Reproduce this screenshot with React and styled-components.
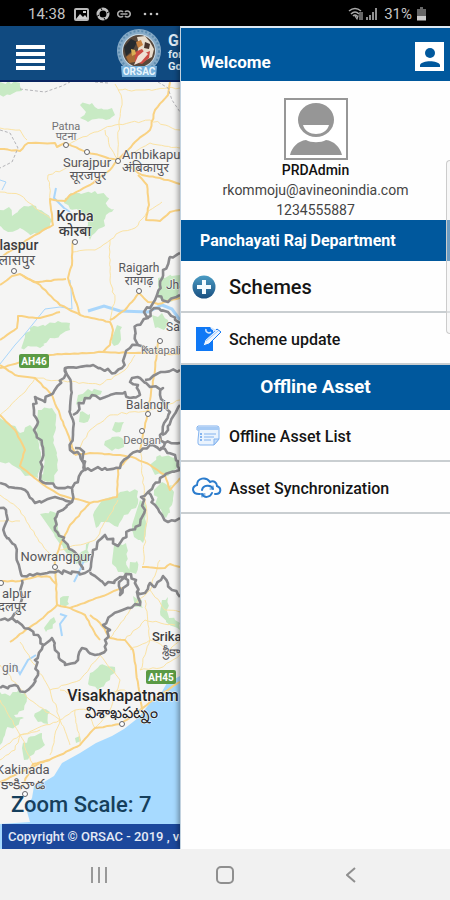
import React from "react";
import styled, { createGlobalStyle } from "styled-components";

const GlobalStyle = createGlobalStyle`
  * { box-sizing: border-box; }
  body { margin: 0; font-family: Roboto, "Noto Sans", sans-serif; background: #f1f1f1; }
  button { border: 0; padding: 0; background: none; font: inherit; color: inherit; cursor: pointer; }
  svg { display: block; flex: none; }
  p, h1, h2, ul { margin: 0; padding: 0; }
`;

const Screen = styled.div`
  display: flex;
  flex-direction: column;
  min-height: 100vh;
`;

const StatusBar = styled.header`
  display: flex;
  align-items: center;
  justify-content: space-between;
  height: 26px;
  padding: 2px 24px 0 28px;
  background: #000;
  color: #c4c4c4;
  font-size: 15px;
  line-height: 20px;
`;

const StatusGroup = styled.div`
  display: flex;
  align-items: center;
  gap: ${(p) => p.$gap}px;
`;

const Stage = styled.main`
  display: flex;
  flex: 1;
`;

const AppPane = styled.section`
  display: flex;
  flex-direction: column;
  width: 40%;
  overflow: hidden;
  background: #f5f5f4;
`;

const AppBar = styled.div`
  display: flex;
  align-items: center;
  height: 56px;
  padding-left: 16px;
  background: #104a80;
  border-bottom: 2px solid #0a2460;
  color: #dfe9f2;
`;

const MenuButton = styled.button`
  display: grid;
  flex: none;
  gap: 3px;
  width: 29px;
  margin-top: 8px;
`;

const MenuLine = styled.span`
  height: 4px;
  background: #fff;
`;

const LogoSlot = styled.div`
  margin-left: 69px;
`;

const BrandText = styled.div`
  margin-left: 4px;
  white-space: nowrap;
  font-weight: 700;
  font-size: 11px;
  line-height: 12px;
`;

const BrandTitle = styled.h1`
  font-size: 16px;
  line-height: 16px;
`;

const MapArea = styled.div`
  position: relative;
  flex: 1;
  overflow: hidden;
`;

const MapSvg = styled.svg`
  position: absolute;
  inset: 0;
  width: 100%;
  height: 100%;
`;

const MapFooter = styled.div`
  position: absolute;
  left: 2px;
  right: 0;
  bottom: 0;
  white-space: nowrap;
`;

const ZoomScale = styled.p`
  padding: 0 0 6px 9px;
  color: #163f5c;
  font-size: 22px;
  font-weight: 500;
  line-height: 26px;
`;

const Copyright = styled.p`
  padding-left: 6px;
  background: #1c489c;
  color: #e4eaf6;
  font-size: 13px;
  font-weight: 500;
  line-height: 25px;
`;

const Drawer = styled.aside`
  position: relative;
  flex: 1;
  background: #fefefe;
  border-top: 2px solid #dce9f4;
  border-left: 1px solid #c3d3e0;
  border-top-right-radius: 3px;
  box-shadow: -2px 0 5px rgba(0, 0, 0, 0.35);
`;

const DrawerHeader = styled.div`
  display: flex;
  align-items: center;
  justify-content: space-between;
  height: 53px;
  padding: 4px 6px 0 19px;
  background: #00589d;
`;

const Welcome = styled.h2`
  padding-top: 10px;
  color: #fff;
  font-size: 17px;
  line-height: 20px;
`;

const Profile = styled.div`
  display: flex;
  flex-direction: column;
  align-items: center;
  height: 139px;
  padding-top: 17px;
  color: #444;
  font-size: 14px;
  line-height: 20px;
`;

const UserName = styled.strong`
  color: #111;
  font-weight: 500;
`;

const SectionBar = styled.h2`
  height: ${(p) => (p.$centered ? 45 : 41)}px;
  padding: 0 19px;
  background: #00589d;
  color: #fff;
  font-size: ${(p) => (p.$centered ? 19 : 16)}px;
  font-weight: 700;
  line-height: ${(p) => (p.$centered ? 43 : 41)}px;
  text-align: ${(p) => (p.$centered ? "center" : "left")};
`;

const MenuItem = styled.button`
  display: flex;
  align-items: center;
  gap: 7px;
  width: 100%;
  height: 52px;
  padding: 2px 0 0 11px;
  border-bottom: 2px solid #c9ced1;
  color: #151515;
  font-size: ${(p) => (p.$large ? 20 : 16)}px;
  font-weight: 500;
  text-align: left;
`;

const IconSlot = styled.span`
  display: flex;
  width: 30px;
`;

const EdgeHandle = styled.div`
  position: absolute;
  top: 132px;
  right: 0;
  width: 4px;
  height: 174px;
  border: 1px solid #ccc;
  border-right: 0;
  border-radius: 4px 0 0 4px;
  background: rgba(240, 240, 240, 0.45);
`;

const NavBar = styled.nav`
  display: grid;
  grid-template-columns: repeat(3, 28%);
  justify-content: center;
  justify-items: center;
  align-items: center;
  position: relative;
  height: 51px;
  background: #f1f1f1;
`;

/* Map geometry: a small seeded wobble turns the key points into natural lines. */
function rough(points, amount) {
  let seed = points[0][0] * 7 + points[0][1] * 13 + 5;
  const rand = () => {
    seed = (seed * 9301 + 49297) % 233280;
    return seed / 233280 - 0.5;
  };
  const out = [points[0]];
  for (let i = 1; i < points.length; i++) {
    const [x0, y0] = points[i - 1];
    const [x1, y1] = points[i];
    const n = Math.max(1, Math.round(Math.hypot(x1 - x0, y1 - y0) / 4));
    for (let k = 1; k <= n; k++) {
      const w = k === n ? 0 : amount;
      out.push([x0 + ((x1 - x0) * k) / n + rand() * w, y0 + ((y1 - y0) * k) / n + rand() * w]);
    }
  }
  return out.map(([x, y]) => `${x.toFixed(1)},${y.toFixed(1)}`).join(" ");
}

const parse = (s) => s.split(" ").map((p) => p.split(",").map(Number));

const greens = [
  "0,82 20,83 22,91 10,95 0,95",
  "80,105 92,103 98,109 112,108 115,115 106,120 96,119 88,122 80,118 86,112",
  "65,198 75,193 95,191 107,197 108,207 114,209 106,215 105,226 95,233 90,240 85,228 92,218 80,212 70,209 64,203",
  "0,210 9,207 12,216 24,206 36,206 45,213 53,221 46,230 38,234 28,233 20,228 8,232 0,226",
  "25,337 30,328 45,326 58,321 70,323 70,330 60,335 50,338 40,348 28,346 20,352",
  "117,325 122,327 120,342 114,346 112,338",
  "152,315 158,317 162,313 168,320 164,330 155,328",
  "158,278 180,275 180,298 168,302 158,297",
  "78,395 88,389 102,391 96,396 84,400 76,405",
  "80,412 90,414 84,423 79,422",
  "115,422 124,422 120,432 112,430",
  "104,445 112,437 122,438 124,447 112,451",
  "38,410 52,408 56,420 54,440 58,460 54,484 42,480 44,455 36,434",
  "0,418 10,425 20,433 30,425 38,440 42,460 38,478 25,476 12,465 0,462",
  "150,465 160,455 175,458 180,465 168,476 155,475",
  "162,482 172,485 172,505 166,518 158,507 154,490",
  "93,515 102,500 115,498 120,492 138,491 136,508 124,515 118,527 105,522 96,528",
  "140,500 146,505 146,530 143,543 134,537 132,525",
  "114,545 126,543 126,562 130,575 118,572 112,562",
  "130,562 137,561 136,574 129,572",
  "40,514 50,511 58,514 58,530 68,548 78,555 90,542 88,562 76,564 64,550 54,534",
  "60,598 69,596 69,604 60,605",
  "162,600 168,597 168,614 180,623 180,630 166,622 160,612",
  "133,596 142,600 143,608 135,607",
  "90,673 100,665 115,667 110,680 98,690 88,684",
  "0,692 10,696 18,690 27,697 24,710 14,715 24,718 16,726 6,730 0,745",
  "22,748 28,738 42,733 45,745 34,754 24,760",
  "34,716 42,709 50,712 48,724 38,722",
  "75,738 80,736 81,741 76,743",
  "44,628 54,617 56,622 46,632",
];

const highways = [
  "0,149 20,151 28,143 55,143 57,147 65,143 87,152 105,157 118,160 131,147 135,142 150,130 155,110 168,95 170,82",
  "118,160 110,170 90,185 70,195 65,201 50,199 53,225 35,235 20,245 0,258",
  "138,175 147,185 149,205 146,220 160,221 170,212 180,210",
  "128,165 142,175 160,178 180,184",
  "73,240 72,265 68,278 75,300 80,315",
  "0,285 12,276 20,274 40,285 60,305 80,315 110,322 113,330 110,345 103,352 70,354 50,355 0,368",
  "20,274 35,282 66,279",
  "0,340 17,328 18,316 40,318 60,312",
  "110,320 125,310 139,293 148,302 158,304 180,298",
  "103,352 135,353 180,354",
  "0,365 15,375 35,378 52,395 60,415 70,440 75,455",
  "0,415 15,430 25,450 20,466 40,482 60,495 90,503 117,497 118,470 130,455",
  "75,455 90,453 120,455 132,457 150,465 165,475 170,490 180,478",
  "158,340 155,370 150,400 140,450",
  "90,503 70,525 60,545 55,560 57,605 70,608 85,615 90,625 100,640",
  "57,605 40,620 10,642",
  "70,608 100,597 122,588",
  "0,581 20,581 38,576 50,577 56,584",
  "142,567 165,568 170,564 180,567",
  "90,615 100,623 110,638 125,640 133,650 136,670 139,690 142,710",
  "0,782 25,770 60,755 80,745 95,728 120,724 140,710 160,695 180,682",
  "20,790 28,775 33,764 50,760",
];

const roads = [
  "0,128 20,130 27,140",
  "65,145 90,134 115,125 150,120 180,130",
  "118,160 119,125 122,100 115,84",
  "118,90 140,90 180,88",
  "105,130 112,150 118,160 150,143 180,148",
  "50,199 48,175 90,160 110,164",
  "0,192 20,195 35,208 50,218",
  "73,252 95,250 110,240 120,232 135,228 150,210 162,202",
  "110,240 110,280 115,300 110,320",
  "0,415 25,392 35,378",
  "35,378 100,385 125,370 135,355",
  "75,455 90,430 110,415 150,410 180,400",
  "0,495 20,510 35,535 55,560",
  "0,521 20,521",
  "140,450 147,515 143,565",
  "118,500 95,540 60,550",
  "20,642 50,690 60,720 50,755",
  "60,690 90,700 120,690 140,695",
  "80,745 75,710 60,720 20,735 0,750",
  "130,650 150,640 170,650 180,640",
  "110,638 130,610 150,590 160,560",
  "145,600 150,640 140,670 160,668 180,655",
  "125,640 145,620 175,625",
  "100,655 120,680 110,710 95,728",
  "0,665 30,700 60,720 70,745",
  "0,700 20,735 33,764",
  "50,690 80,680 105,650",
  "150,590 165,610 180,612",
  "95,728 88,710 75,710",
  "0,760 15,750 20,735 40,730",
];

const borders = [
  "180,253 170,257 163,270 160,285 157,295 155,300 144,312 148,318 137,325 135,335 138,345 130,348 125,355 122,368 115,373 100,368 90,366 65,368 64,378 50,395 45,402 35,397 34,410 38,422 34,430 42,445 42,460 40,480 55,487 72,488",
  "157,296 168,302 180,295",
  "146,318 154,308 168,312 180,323",
  "138,345 150,350",
  "65,368 71,385 70,410 73,420 73,435 70,450 80,455 85,470 105,468 120,468 130,455 150,445 160,450 165,443 180,443",
  "73,415 85,398 92,395 100,399 125,392 130,398 140,395 138,385 130,382 132,378 140,378 150,387 163,388 160,395 165,405 170,412 160,435 165,443",
  "145,380 155,375 165,372 180,370",
  "180,405 174,415 168,430 162,435",
  "75,448 84,452 84,470 72,488 72,502 58,512 55,530 72,550 83,570",
  "0,483 25,490 35,503 55,497 72,502",
  "0,508 6,510 5,535 15,545 20,570 22,576 50,572 85,573 90,570 93,550 105,535 118,546 130,530 140,525 145,510 141,497 148,492 160,478 180,470 175,455 160,448",
  "148,492 155,505 162,515 168,522 180,518",
  "90,572 105,585 120,577 126,574 128,580 120,595 119,582 126,574 136,580 137,592 145,593 150,583 155,587 163,576 172,590 180,597",
  "137,592 140,605 130,608 112,615 103,625 110,630 105,640 106,650 95,655 82,648 78,660 65,665 55,650 52,638 44,645 38,635 22,625 12,618 20,605 22,580",
  "0,620 12,618",
  "43,645 35,660 38,675 33,685 25,692 15,685 0,688",
];

const labels = [
  [66, 130, "Patna", 11, 0], [66, 140, "पटना", 11, 0],
  [87, 167, "Surajpur", 13, 1], [88, 180, "सूरजपुर", 13, 1],
  [122, 159, "Ambikapur", 13, 1, "start"], [122, 172, "अंबिकापुर", 13, 1, "start"],
  [75, 221, "Korba", 14, 2], [75, 236, "कोरबा", 14, 2],
  [-13, 250, "Bilaspur", 14, 2, "start"], [-13, 265, "बिलासपुर", 14, 1, "start"],
  [139, 272, "Raigarh", 12, 1], [139, 285, "रायगढ़", 12, 1],
  [166, 289, "Jharsuguda", 12, 1, "start"],
  [166, 331, "Sambalpur", 12, 1, "start"],
  [141, 354, "Katapali", 11, 0, "start"],
  [148, 409, "Balangir", 12, 1], [142, 444, "Deogan", 11, 0],
  [56, 561, "Nowrangpur", 13, 1],
  [2, 598, "alpur", 13, 1, "start"], [-2, 611, "दलपुर", 13, 1, "start"],
  [2, 672, "gin", 12, 0, "start"],
  [152, 641, "Srikakulam", 13, 2, "start"], [162, 656, "శ్రీకాకుళం", 13, 1, "start"],
  [123, 701, "Visakhapatnam", 16, 3], [121, 718, "విశాఖపట్నం", 16, 3],
  [-4, 774, "Kakinada", 13, 1, "start"], [1, 789, "కాకినాడ", 14, 1, "start"],
];

const tones = ["#717174", "#56565a", "#3c3c40", "#242428"];

const towns = [
  [66, 145], [87, 152], [118, 161], [75, 242], [14, 271], [139, 291], [160, 341],
  [148, 414], [142, 431], [55, 567], [1, 583], [122, 724], [25, 794],
];

const shields = [[19, 354, "AH46"], [146, 670, "AH45"]];

function RegionMap() {
  return (
    <MapSvg viewBox="0 82 180 767" preserveAspectRatio="xMinYMin slice" role="img" aria-label="Map">
      <rect x="0" y="82" width="100%" height="767" fill="#f5f5f4" />
      {greens.map((g) => <polygon key={g} points={rough(parse(g), 4)} fill="#c8eac4" />)}
      <polygon
        points="180,676 167,683 160,695 150,703 138,718 124,729 112,736 96,743 80,753 62,763 54,776 44,782 34,786 32,798 26,808 30,822 0,824 0,849 900,849 900,676"
        fill="#a7daff"
      />
      <g fill="none" stroke="#a9d6fb" strokeWidth="2">
        <polyline points="0,364 15,345 24,335 45,309 60,307 72,309 71,290 70,280" strokeWidth="1" />
        <polyline points="88,311 104,306 120,311 148,312 162,305 172,309 180,320" strokeWidth="3" />
        <polyline points="56,188 54,198 64,208 70,212" />
        <polyline points="60,614 66,616 60,624 62,636" />
        <polyline points="74,582 80,570 84,560" />
        <polyline points="14,664 20,674 28,660 36,655" />
        <polyline points="0,180 6,182 2,190" strokeWidth="1" />
      </g>
      <g fill="none" stroke="#fbe3a4" strokeWidth="1">
        {roads.map((r) => <polyline key={r} points={rough(parse(r), 2)} />)}
      </g>
      <g fill="none" stroke="#f9d283" strokeWidth="2" strokeLinejoin="round">
        {highways.map((r) => <polyline key={r} points={rough(parse(r), 1)} />)}
      </g>
      <g fill="none" stroke="#b4b4b8" strokeWidth="1" strokeDasharray="3 2">
        <polyline points="20,89 45,92 62,86 70,82" />
        <polyline points="95,82 108,83" />
        <polyline points="158,82 168,88 172,100 180,112" />
        <polyline points="0,130 10,133 18,148 12,162 0,168" />
      </g>
      <g fill="none" stroke="#8a8a8d" strokeWidth="2.6" strokeLinejoin="round">
        {borders.map((b) => <polyline key={b} points={rough(parse(b), 4)} />)}
      </g>
      <g fill="#fff" stroke="#66666a" strokeWidth="1">
        {towns.map(([x, y]) => <circle key={`${x}-${y}`} cx={x} cy={y} r="2.5" />)}
      </g>
      {shields.map(([x, y, name]) => (
        <g key={name}>
          <rect x={x} y={y} width="30" height="14" rx="2" fill="#5a9a44" />
          <text x={x + 15} y={y + 11} fill="#fff" fontSize="10" fontWeight="700" textAnchor="middle">{name}</text>
        </g>
      ))}
      <g stroke="#f8f8f6" strokeWidth="1" strokeLinejoin="round" paintOrder="stroke">
        {labels.map(([x, y, text, size, tone, anchor = "middle"]) => (
          <text key={text} x={x} y={y} fontSize={size} fill={tones[tone]} textAnchor={anchor}
            fontWeight={tone > 1 ? 500 : 400}>{text}</text>
        ))}
      </g>
    </MapSvg>
  );
}

function OrsacLogo() {
  return (
    <svg width="50" height="50" viewBox="0 0 50 50" role="img" aria-label="ORSAC">
      <circle cx="25" cy="23" r="22" fill="#87abc7" />
      <circle cx="25" cy="23" r="20" fill="none" stroke="#5f8db0" strokeWidth="2" strokeDasharray="2 2" />
      <circle cx="25" cy="23" r="17" fill="#c7d9e5" />
      <circle cx="25" cy="23" r="16" fill="#57473a" />
      <path d="M10 19 17 11l6 3-4 8-7 6z" fill="#262b2f" />
      <path d="M12 29l8-6 3 4-2 7-6 1z" fill="#a66b36" />
      <path d="M23 9l8-1 5 6 4 7-2 8-8 4-7-7 2-9z" fill="#e8ddcd" />
      <path d="M22 14l5-2 2 5-5 3z" fill="#c88240" />
      <path d="M31 14l5 2-1 5-5-1z" fill="#49352c" />
      <path d="M21 24l7-3 3 4 5-2-1 7-7 6-7-2z" fill="#cb4b43" />
      <path d="M24 28l6-5 4 3-7 8-7 3z" fill="#efe0d5" />
      <path d="M17 21l4 1 1 4-4 2z" fill="#d9ae54" />
      <path d="M7 38h36l-1 11H8z" fill="#76b0db" />
      <text x="25" y="47" fontSize="10" fontWeight="700" textAnchor="middle" fill="#e9f5fd">ORSAC</text>
    </svg>
  );
}

function StatusIcons() {
  return (
    <StatusGroup $gap={7}>
      <svg width="15" height="13" viewBox="0 0 15 13">
        <rect x="1" y="1" width="13" height="11" rx="1" fill="none" stroke="#b9b9b9" strokeWidth="2" />
        <path d="M2 11l4-5 3 3 2-2 3 4zM9 3h3v2H9z" fill="#d0d0d0" />
      </svg>
      <svg width="14" height="14" viewBox="0 0 14 14" fill="none" stroke="#c0c0c0" strokeWidth="3">
        <circle cx="7" cy="7" r="5" />
        <path d="M4 0l2 3M14 4l-3 2M10 14l-2-3M0 10l3-2" stroke="#000" strokeWidth="1" />
      </svg>
      <svg width="14" height="10" viewBox="0 0 14 10" fill="none" stroke="#aaa" strokeWidth="1.6">
        <path d="M6 3a3 3 0 1 0 0 4M3.5 5H8M8 7a3 3 0 1 0 0-4M10.500 5H7" />
      </svg>
      <svg width="26" height="6" viewBox="0 0 26 6" fill="#c4c4c4">
        <circle cx="7" cy="3" r="1.3" /><circle cx="13" cy="3" r="1.3" /><circle cx="19" cy="3" r="1.3" />
      </svg>
    </StatusGroup>
  );
}

function SignalIcons() {
  return (
    <svg width="31" height="14" viewBox="0 0 31 14" fill="none" stroke="#aaa">
      <path d="M1 4q6-5 12 0M3 7q4-4 8 0M5 9q2-2 4 0" strokeWidth="1.6" />
      <path d="M7 9l2 3 1-3zM12 5v8M14 5v8" strokeWidth="1.2" />
      <path d="M19 10v3M22 8v5M25 5v8M28 1v12" stroke="#8f8f8f" strokeWidth="2" />
    </svg>
  );
}

function BatteryIcon() {
  return (
    <svg width="9" height="14" viewBox="0 0 9 14">
      <path d="M3 0h3v2h3v12H0V2h3z" fill="#666" />
      <path d="M0 9h9v4H0z" fill="#ccc" />
    </svg>
  );
}

function AccountIcon() {
  return (
    <svg width="29" height="29" viewBox="0 0 29 29">
      <path fill="#fff" d="M0 0h29v29H0z" />
      <circle cx="15" cy="11" r="5" fill="#00589d" />
      <path d="M5 25v-2c2-5 18-5 20 0v2z" fill="#00589d" />
    </svg>
  );
}

function Avatar() {
  return (
    <svg width="64" height="62" viewBox="0 0 64 62">
      <rect x="1" y="1" width="62" height="60" fill="#fff" stroke="#979797" strokeWidth="2" />
      <path d="M6 57c2-8 8-14 16-15 5 3 15 3 20 0 8 1 14 7 16 15z" fill="#969696" />
      <ellipse cx="32" cy="22" rx="18" ry="17" fill="#969696" />
      <path d="M19 27h26c-3 12-23 12-26 0z" fill="#fff" />
    </svg>
  );
}

function PlusIcon() {
  return (
    <svg width="24" height="24" viewBox="0 0 24 24">
      <defs>
        <linearGradient id="plusFill" x1="0" y1="0" x2="0" y2="1">
          <stop offset="0" stopColor="#4b9cc4" /><stop offset="1" stopColor="#194f80" />
        </linearGradient>
      </defs>
      <circle cx="12" cy="12" r="11.5" fill="url(#plusFill)" />
      <path d="M12 5v14M5 12h14" stroke="#f4fbff" strokeWidth="4" />
    </svg>
  );
}

function EditIcon() {
  return (
    <svg width="30" height="26" viewBox="0 0 30 26">
      <path d="M4 1h14l3 3v21H4z" fill="#0f78f5" />
      <path d="M11 20l2-6L25 3l4 3-12 12z" fill="#eef6ff" stroke="#1479f3" strokeWidth="1" />
      <path d="M14 15l12-10" stroke="#9cc8fb" strokeWidth="1" />
      <path d="M14 3a3 3 0 0 0 5 3M19 2l5 3" fill="none" stroke="#cfe4fe" strokeWidth="1.5" />
    </svg>
  );
}

function ListIcon() {
  return (
    <svg width="30" height="22" viewBox="0 0 30 22" fill="none" stroke="#83b3ef">
      <path d="M6 1h19q2 0 2 2v11l-5 6H8q-2 0-2-2v-3l1-10H5V2z" fill="#eaf3fd" />
      <path d="M5 2h22v3H5z" fill="#a7cbf5" stroke="none" />
      <path d="M9 8v9" strokeWidth="2" strokeDasharray="2 1" />
      <path d="M12 9h12M12 12h10M12 15h7" />
      <path d="M27 14h-5v6z" fill="#c5ddf8" />
    </svg>
  );
}

function CloudSyncIcon() {
  return (
    <svg width="30" height="22" viewBox="0 0 30 22" fill="none" stroke="#2b7ccd" strokeWidth="2" strokeLinecap="round">
      <path d="M8 17H7C0 17-1 10 5 8 5 1 14-1 18 5c4-2 7 1 7 4 5 2 4 8-1 8h-1" />
      <path d="M10 13c1-5 9-6 11-1M20 16c-2 5-8 5-10 1" />
      <path d="M21 9v3h-3M10 20v-3h3" strokeWidth="1" />
    </svg>
  );
}

export default function App() {
  return (
    <Screen>
      <GlobalStyle />
      <StatusBar>
        <StatusGroup $gap={9}>
          <time>14:38</time>
          <StatusIcons />
        </StatusGroup>
        <StatusGroup $gap={5}>
          <SignalIcons />
          <span>31%</span>
          <BatteryIcon />
        </StatusGroup>
      </StatusBar>

      <Stage>
        <AppPane>
          <AppBar>
            <MenuButton aria-label="Menu">
              <MenuLine /><MenuLine /><MenuLine /><MenuLine />
            </MenuButton>
            <LogoSlot><OrsacLogo /></LogoSlot>
            <BrandText>
              <BrandTitle>GIS</BrandTitle>
              <p>for</p>
              <p>Go</p>
            </BrandText>
          </AppBar>
          <MapArea>
            <RegionMap />
            <MapFooter>
              <ZoomScale>Zoom Scale: 7</ZoomScale>
              <Copyright>Copyright © ORSAC - 2019 , ver</Copyright>
            </MapFooter>
          </MapArea>
        </AppPane>

        <Drawer>
          <DrawerHeader>
            <Welcome>Welcome</Welcome>
            <button aria-label="Account"><AccountIcon /></button>
          </DrawerHeader>
          <Profile>
            <Avatar />
            <UserName>PRDAdmin</UserName>
            <p>rkommoju@avineonindia.com</p>
            <p>1234555887</p>
          </Profile>
          <SectionBar>Panchayati Raj Department</SectionBar>
          <MenuItem $large><IconSlot><PlusIcon /></IconSlot>Schemes</MenuItem>
          <MenuItem><IconSlot><EditIcon /></IconSlot>Scheme update</MenuItem>
          <SectionBar $centered>Offline Asset</SectionBar>
          <MenuItem><IconSlot><ListIcon /></IconSlot>Offline Asset List</MenuItem>
          <MenuItem><IconSlot><CloudSyncIcon /></IconSlot>Asset Synchronization</MenuItem>
          <EdgeHandle />
        </Drawer>
      </Stage>

      <NavBar>
        <button aria-label="Recent apps">
          <svg width="18" height="16" viewBox="0 0 18 16" stroke="#999" strokeWidth="2"><path d="M2 0v16M9 0v16M16 0v16" /></svg>
        </button>
        <button aria-label="Home">
          <svg width="18" height="18" viewBox="0 0 18 18" fill="none" stroke="#8f8f8f" strokeWidth="2"><rect x="1" y="1" width="16" height="16" rx="4" /></svg>
        </button>
        <button aria-label="Back">
          <svg width="10" height="16" viewBox="0 0 10 16" fill="none" stroke="#8f8f8f" strokeWidth="2"><path d="M9 1 1 8l8 7" /></svg>
        </button>
      </NavBar>
    </Screen>
  );
}
